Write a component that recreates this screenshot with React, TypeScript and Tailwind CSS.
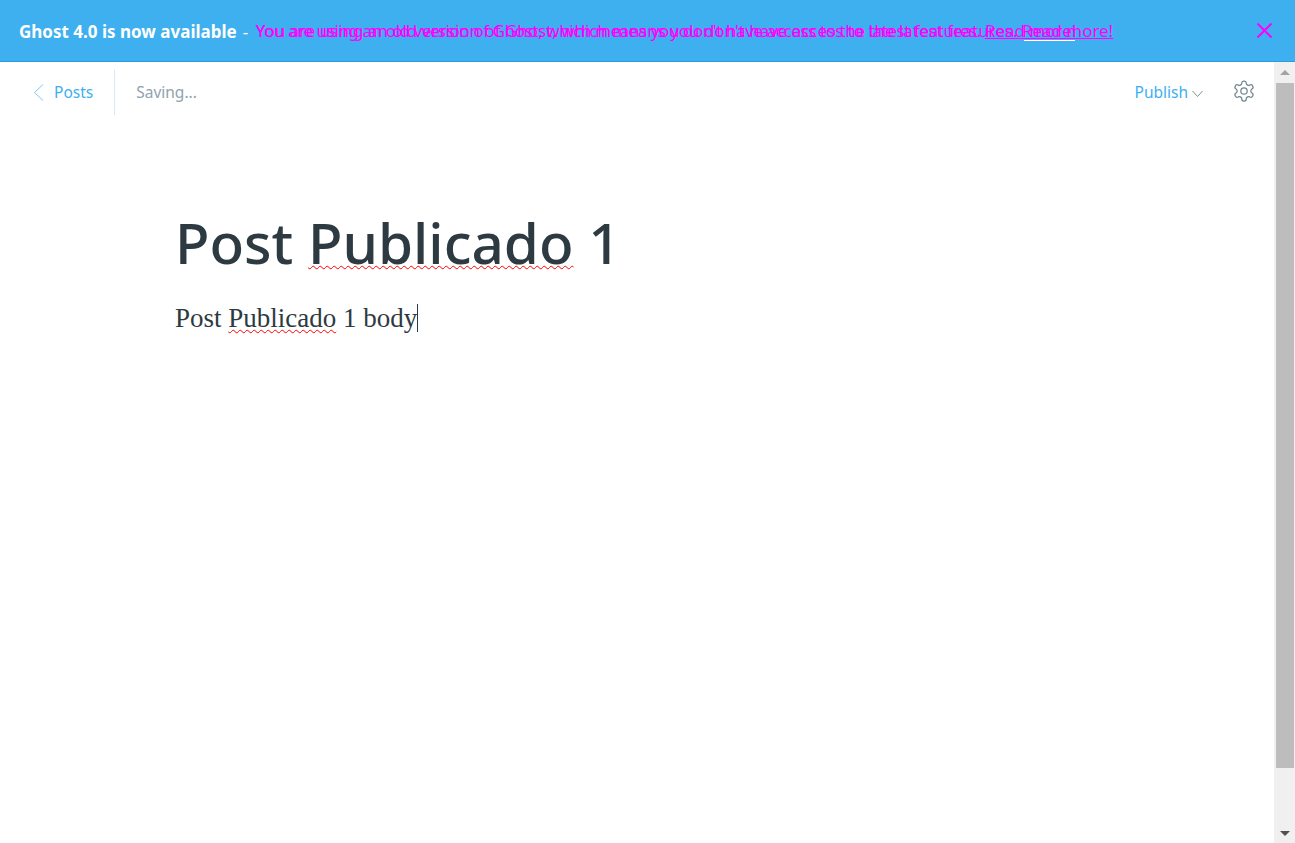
const SANS = "font-['Noto_Sans','Open_Sans',sans-serif]";

function Banner() {
  return (
    <div className="relative flex h-[62px] shrink-0 items-center justify-between border-b border-[#2a9be0] bg-[#3eb0ef] pl-[19px] pr-[23px] text-[17px] text-white">
      <div className="flex items-center whitespace-nowrap pt-[2px]">
        <span className="font-bold">Ghost 4.0 is now available</span>
        <span className="ml-[6px] w-[11px]">-</span>
        <span className="relative ml-[2px] h-[24px] w-[860px] text-[16.95px]">
          <span className="absolute left-0 top-[-2px] text-[#ff00ff]">
            You are using an old version of Ghost, which means you don't have access to the latest features. <u>Read more!</u>
          </span>
          <span className="absolute left-0 top-[-2px] tracking-[-0.38px] text-[#ff00ff]">
            You are using an old version of Ghost, which means you don't have access to the latest features. <u className="tracking-normal">Read more!</u>
          </span>
          <span className="absolute left-[768px] top-[20px] h-px w-[51px] bg-white" />
        </span>
      </div>
      <svg width="15" height="15" viewBox="0 0 15 15" fill="none" stroke="#ff00ff" strokeWidth="2">
        <path d="M0.5 0.5 L14.5 14.5 M14.5 0.5 L0.5 14.5" />
      </svg>
    </div>
  );
}

function Toolbar() {
  return (
    <div className="flex h-[63px] items-start justify-between pl-[33px] pr-[18px] pt-[8px]">
      <div className="flex h-[45px] items-center">
        <div className="flex h-full items-center border-r border-[#dae8f3] pr-[21px] text-[#3eb0ef]">
          <svg width="11" height="17" viewBox="0 0 11 17" fill="none" stroke="#7cc8f3" strokeWidth="1" className="mr-[10px]">
            <path d="M10 0.5 L1.5 8.5 L10 16.5" />
          </svg>
          <span className="text-[15.5px]">Posts</span>
        </div>
        <span className="ml-[21px] text-[15.5px] text-[#8fa3ae]">Saving...</span>
      </div>
      <div className="flex h-[45px] items-center">
        <span className="text-[15.5px] text-[#3eb0ef]">Publish</span>
        <svg width="11" height="8" viewBox="0 0 11 8" fill="none" stroke="#7d929e" strokeWidth="1" className="ml-[4px] mr-[1px] mt-[2px]">
          <path d="M0.5 1 L5.5 6.5 L10.5 1" />
        </svg>
        <svg width="24" height="24" viewBox="0 0 24 24" fill="none" stroke="#6f8591" strokeWidth="1.25" strokeLinecap="round" strokeLinejoin="round" className="ml-[28px] -mt-[3px]">
          <path d="M12.22 2h-.44a2 2 0 0 0-2 2v.18a2 2 0 0 1-1 1.73l-.43.25a2 2 0 0 1-2 0l-.15-.08a2 2 0 0 0-2.73.73l-.22.38a2 2 0 0 0 .73 2.73l.15.1a2 2 0 0 1 1 1.72v.51a2 2 0 0 1-1 1.74l-.15.09a2 2 0 0 0-.73 2.73l.22.38a2 2 0 0 0 2.73.73l.15-.08a2 2 0 0 1 2 0l.43.25a2 2 0 0 1 1 1.73V20a2 2 0 0 0 2 2h.44a2 2 0 0 0 2-2v-.18a2 2 0 0 1 1-1.73l.43-.25a2 2 0 0 1 2 0l.15.08a2 2 0 0 0 2.73-.73l.22-.39a2 2 0 0 0-.73-2.73l-.15-.08a2 2 0 0 1-1-1.74v-.5a2 2 0 0 1 1-1.74l.15-.09a2 2 0 0 0 .73-2.73l-.22-.38a2 2 0 0 0-2.73-.73l-.15.08a2 2 0 0 1-2 0l-.43-.25a2 2 0 0 1-1-1.73V4a2 2 0 0 0-2-2z" />
          <circle cx="12" cy="12" r="3.2" />
        </svg>
      </div>
    </div>
  );
}

function Scrollbar() {
  return (
    <div className="flex w-[21px] shrink-0 flex-col items-center bg-[#f0f0f0] pl-[1px]">
      <div className="flex h-[21px] w-full items-center justify-center">
        <div className="h-0 w-0 border-x-[5px] border-b-[5px] border-x-transparent border-b-[#a3a3a3]" />
      </div>
      <div className="h-[685px] w-[18px] bg-[#bdbdbd]" />
      <div className="flex flex-1 items-end justify-center pb-[7px]">
        <div className="h-0 w-0 border-x-[5px] border-t-[5px] border-x-transparent border-t-[#505050]" />
      </div>
    </div>
  );
}

export default function App() {
  return (
    <div className={`flex h-[843px] w-[1295px] flex-col overflow-hidden bg-white ${SANS}`}>
      <Banner />
      <div className="flex min-h-0 flex-1">
        <div className="min-w-0 flex-1">
          <Toolbar />
          <main className="pl-[175px] pt-[82px]">
            <h1 className="text-[56.6px] font-medium leading-[70px] text-[#2e3a41]">
              Post <span className="underline decoration-[#ff0000] decoration-wavy decoration-1 underline-offset-[1px]">Publicado</span> 1
            </h1>
            <p className="mt-[25px] flex items-center font-['Liberation_Serif',serif] text-[27px] leading-[32px] text-[#2e3a41]">
              <span>
                Post <span className="underline decoration-[#ff0000] decoration-wavy decoration-1 underline-offset-[2px]">Publicado</span> 1 body
              </span>
              <span className="h-[28px] w-px bg-[#2e3a41]" />
            </p>
          </main>
        </div>
        <Scrollbar />
      </div>
    </div>
  );
}
